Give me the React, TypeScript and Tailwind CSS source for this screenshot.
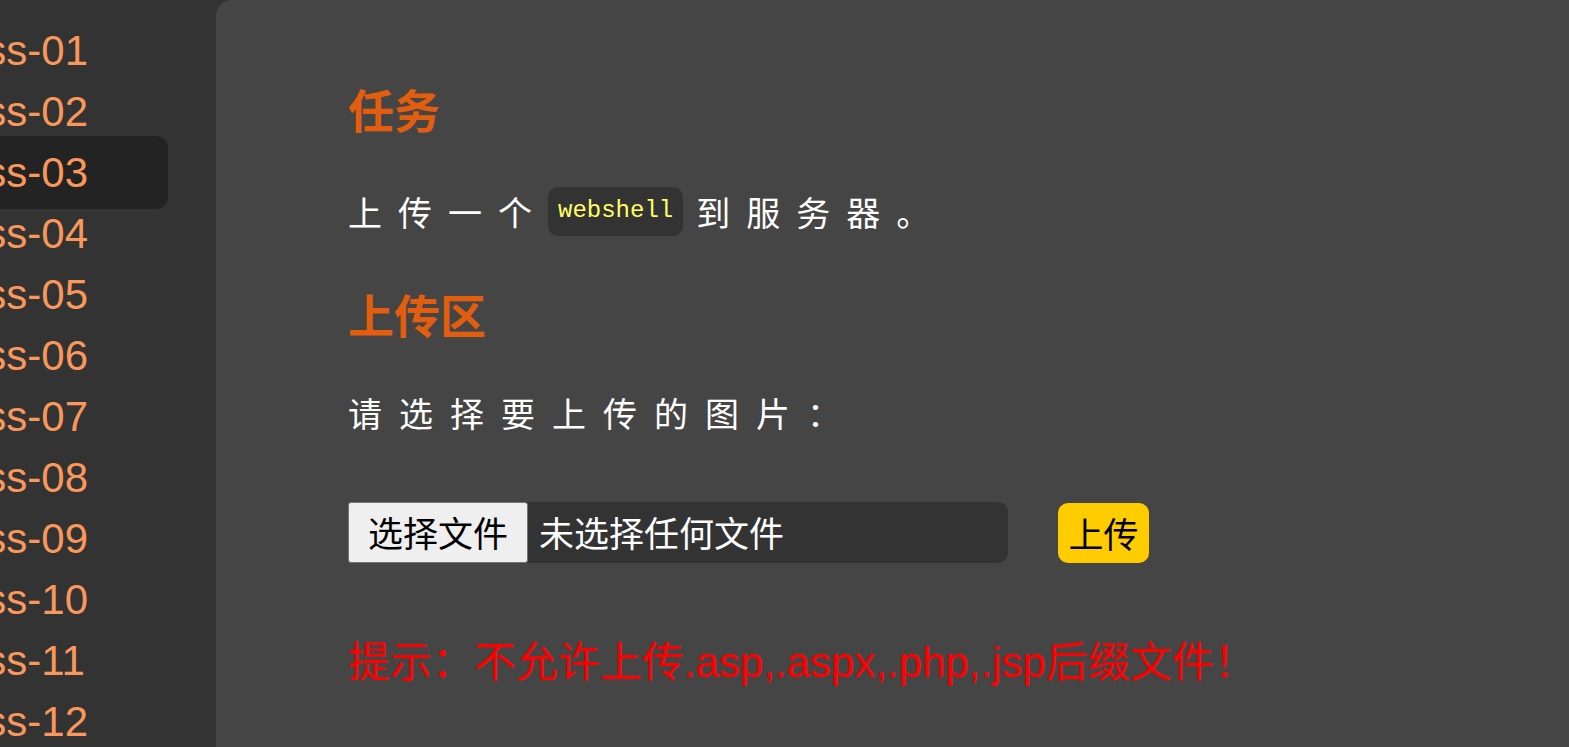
import React from 'react';

const passes = ['01', '02', '03', '04', '05', '06', '07', '08', '09', '10', '11', '12', '13', '14'];

const Sidebar: React.FC<{ active: string }> = ({ active }) => {
  return (
    <aside className="w-[216px] shrink-0 overflow-hidden bg-[#333333]">
      <ul className="flex flex-col pt-[20px] font-['Liberation_Sans',Arial,sans-serif] text-[42px] text-[#f9985a]">
        {passes.map((p) => (
          <li
            key={p}
            className={`-my-[6px] py-[6px] leading-[61px] ml-[-82px] w-[250px] pl-[16px] rounded-[12px] whitespace-nowrap ${p === active ? 'bg-[#232323]' : ''}`}
          >
            Pass-{p}
          </li>
        ))}
      </ul>
    </aside>
  );
};

const App: React.FC = () => {
  return (
    <div className="flex h-screen w-full overflow-hidden bg-[#333333]">
      <Sidebar active="03" />
      <main className="flex-1 rounded-tl-[16px] bg-[#454545] pl-[132px] pt-[80px] font-['Noto_Sans_CJK_SC',sans-serif]">
        <h2 className="text-[46px] leading-[56px] font-bold text-[#e35d0e]">任务</h2>
        <p className="mt-[50px] flex items-center h-[50px] text-[34px] tracking-[16px] text-white">
          <span>上传一个</span>
          <code className="mr-[13px] inline-flex h-[49px] items-center rounded-[10px] bg-[#333333] px-[10px] font-['Liberation_Mono',monospace] text-[24px] tracking-normal text-[#ffff66]">
            webshell
          </code>
          <span>到服务器。</span>
        </p>
        <h2 className="mt-[49px] text-[46px] leading-[56px] font-bold text-[#e35d0e]">上传区</h2>
        <p className="mt-[47px] h-[50px] leading-[50px] text-[34px] tracking-[17px] text-white">请选择要上传的图片：</p>
        <form className="mt-[63px] flex items-center" onSubmit={(e) => e.preventDefault()}>
          <div className="flex h-[61px] w-[660px] items-center rounded-[10px] bg-[#333333] text-[35px]">
            <button
              type="button"
              className="flex h-[61px] w-[180px] items-center justify-center rounded-[3px] border border-[#767676] bg-[#efefef] text-black"
            >
              选择文件
            </button>
            <span className="ml-[11px] text-white">未选择任何文件</span>
          </div>
          <button
            type="submit"
            className="ml-[50px] mt-[2px] flex h-[60px] w-[91px] items-center justify-center rounded-[10px] bg-[#ffcc00] text-[35px] text-black"
          >
            上传
          </button>
        </form>
        <p className="mt-[75px] h-[50px] leading-[50px] font-['Liberation_Sans','Noto_Sans_CJK_SC',sans-serif] text-[42px] text-[#ff0000]">
          提示：不允许上传.asp,.aspx,.php,.jsp后缀文件！
        </p>
      </main>
    </div>
  );
};

export default App;
